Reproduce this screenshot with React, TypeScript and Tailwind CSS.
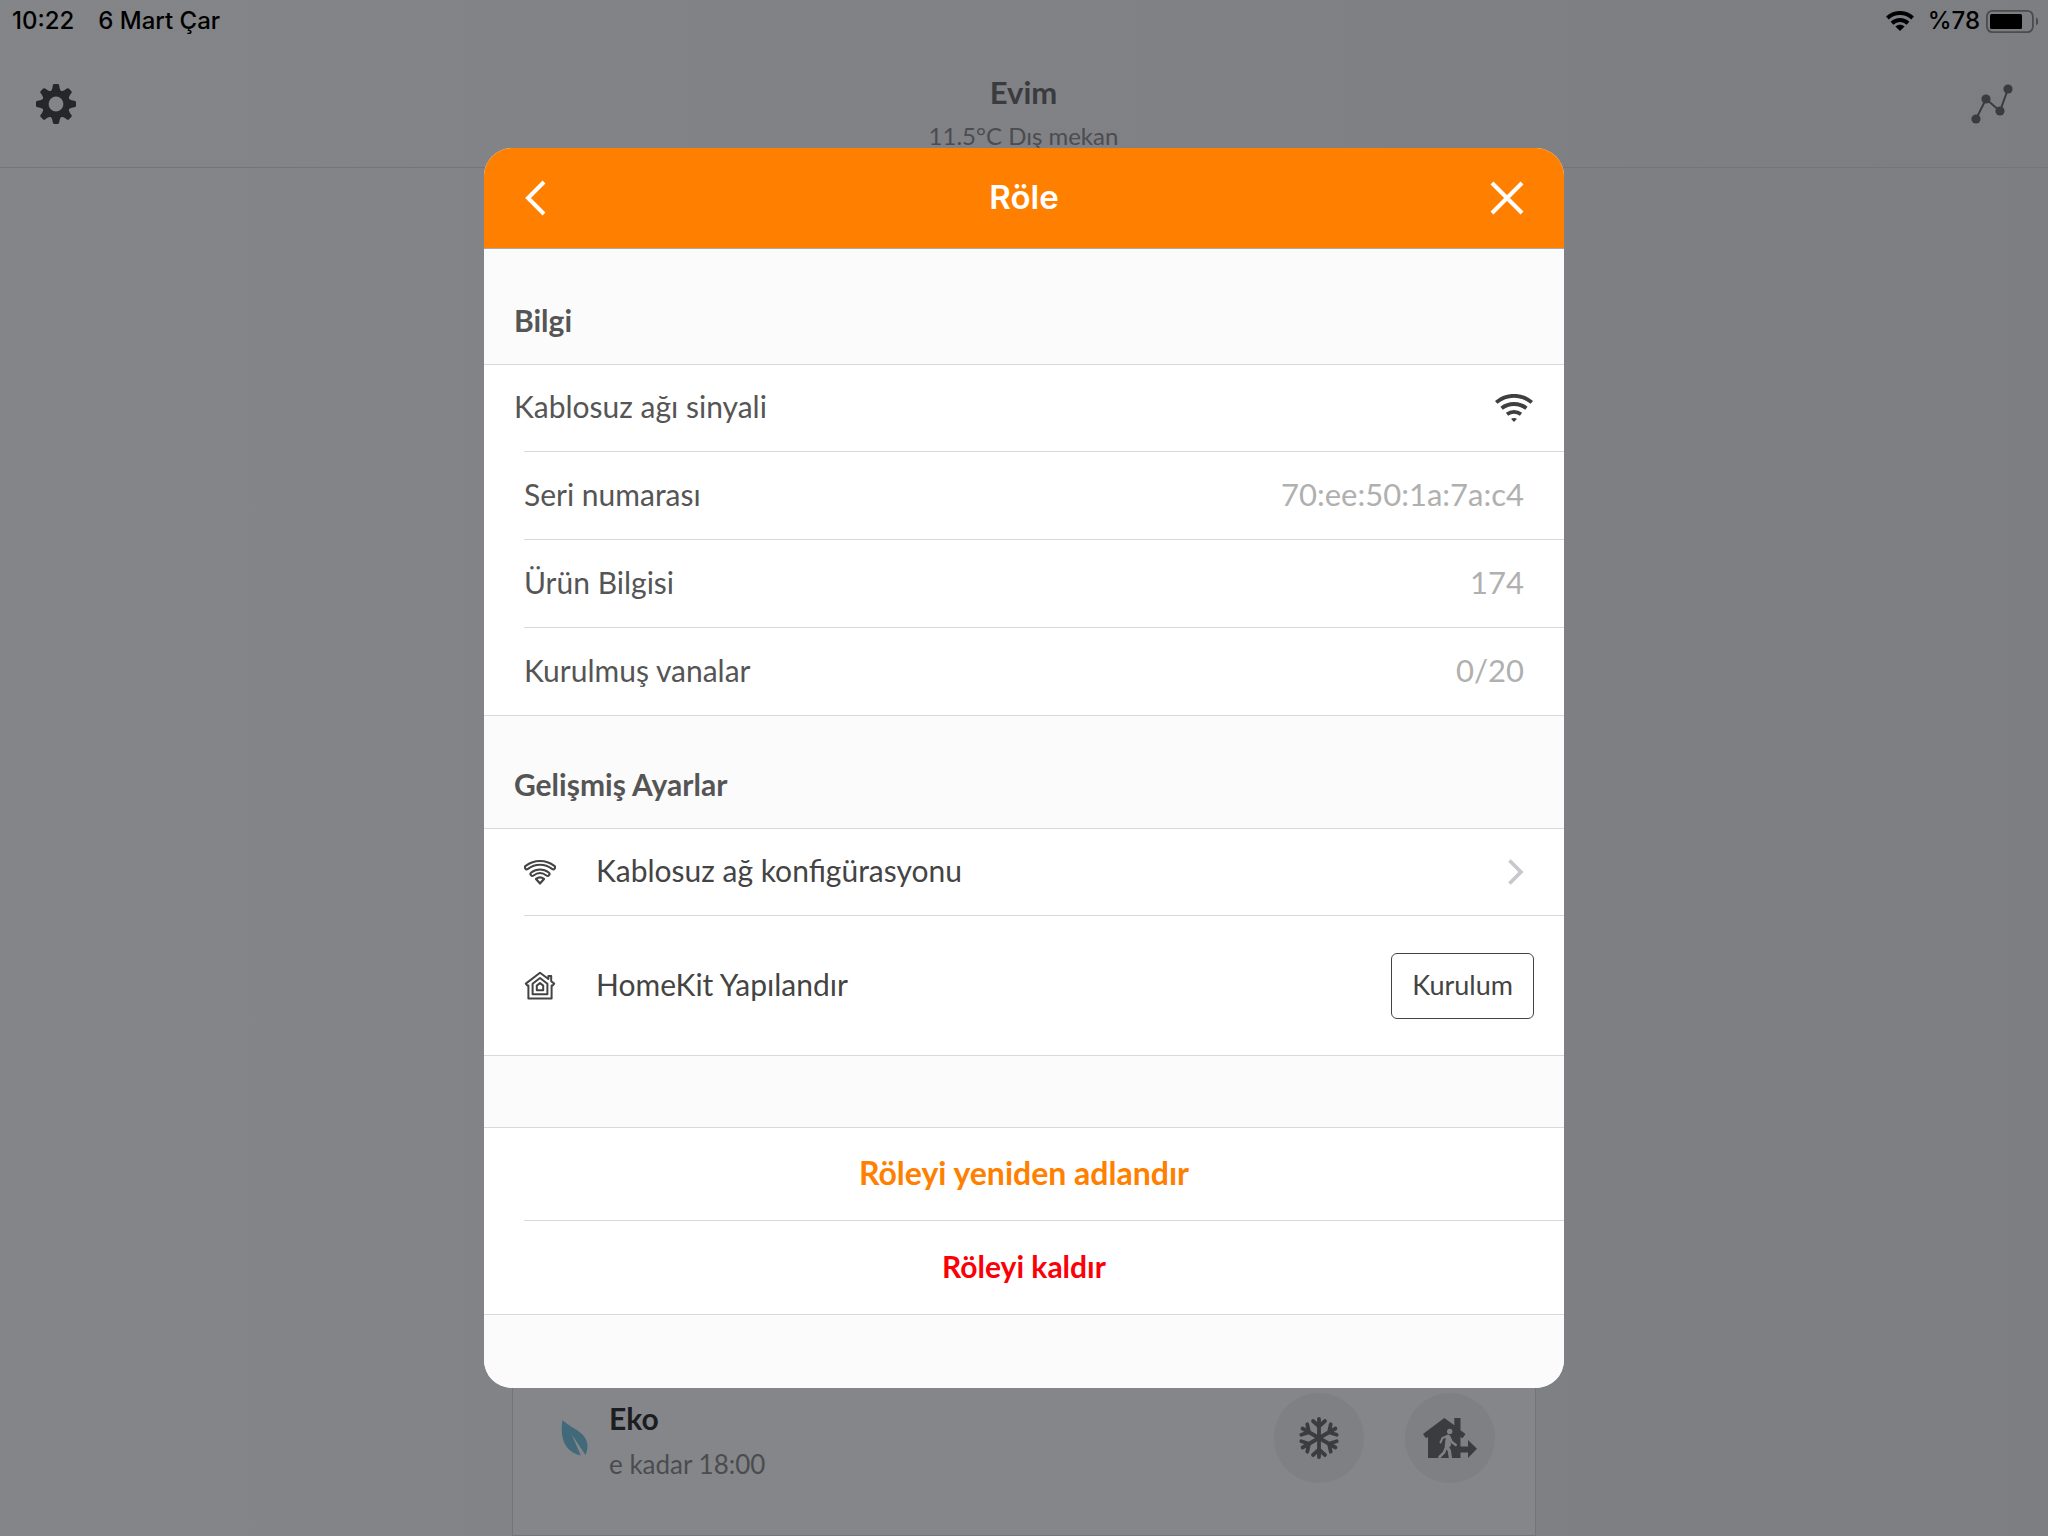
import type { ReactNode } from "react";

const StatusWifi = () => (
  <svg width="28" height="20" viewBox="0 0 28 20" fill="none" stroke="#000" strokeWidth="4">
    <path d="M1.4 7C8.600 .3 19.400 .3 26.600 7" />
    <path d="M6 12.200C10.600 8 17.400 8 22 12.200" />
    <path d="M14 20l-4.600-4.600c2.700-2.200 6.500-2.200 9.200 0z" fill="#000" stroke="none" />
  </svg>
);

const Battery = () => (
  <svg width="52" height="23" viewBox="0 0 52 23">
    <rect x="0.900" y="0.900" width="46" height="21.200" rx="5.500" fill="none" stroke="#4b4c4e" strokeWidth="1.800" />
    <rect x="4" y="4" width="32" height="15" rx="1.500" fill="#000" />
    <path d="M50 7.500c3.400 1.700 3.400 6.300 0 8z" fill="#4b4c4e" />
  </svg>
);

const GearIcon = () => (
  <svg width="40" height="40" viewBox="-20 -20 40 40" fill="#26272b">
    <circle r="10.700" fill="none" stroke="#26272b" strokeWidth="6.600" />
    {[0, 45, 90, 135, 180, 225, 270, 315].map((angle) => (
      <path
        key={angle}
        transform={`rotate(${angle})`}
        d="M-5.500-12.500C-4-14-3.500-16-3.200-18.600Q-3-20-1.800-20H1.800Q3-20 3.200-18.600C3.500-16 4-14 5.500-12.500z"
      />
    ))}
  </svg>
);

const GraphIcon = () => (
  <svg width="42" height="40" viewBox="0 0 42 40" fill="#3a3b3e">
    <path d="M5 35L15 15l14 12L37 5" fill="none" stroke="#3a3b3e" strokeWidth="2" />
    <circle cx="5" cy="35" r="4.600" />
    <circle cx="15" cy="15" r="4.600" />
    <circle cx="29" cy="27" r="4.600" />
    <circle cx="37" cy="5" r="4.600" />
  </svg>
);

const BackIcon = () => (
  <svg width="34" height="36" viewBox="0 0 34 36" fill="none" stroke="#fff" strokeWidth="4">
    <path d="M20 2L4 18l16 16" />
  </svg>
);

const CloseIcon = () => (
  <svg width="34" height="34" viewBox="0 0 34 34" fill="none" stroke="#fff" strokeWidth="4">
    <path d="M2 2l30 30M32 2L2 32" />
  </svg>
);

const ChevronIcon = () => (
  <svg width="16" height="26" viewBox="0 0 16 26" fill="none" stroke="#c7c7cc" strokeWidth="3.600">
    <path d="M1.500 1.500L13 13 1.500 24.500" />
  </svg>
);

const SignalIcon = () => (
  <svg width="39" height="28" viewBox="0 0 39 28" fill="none" stroke="#3f3f3f" strokeWidth="3.800">
    <path d="M1.200 8.400c10.600-8.800 25-8.800 35.600 0" />
    <path d="M6.600 14.200c7.200-5.600 17.600-5.600 24.800 0" />
    <path d="M12 20.200c4.200-3 9.800-3 14 0" />
    <path d="M16 24.800c1.900-1.100 4.100-1.100 6 0L19 28z" fill="#3f3f3f" stroke="none" />
  </svg>
);

const wifiArcs = ["M2.800 8.400C10.700 2.400 21.300 2.400 29.200 8.400", "M8.400 15c4.600-3.600 10.600-3.600 15.200 0"];

const WifiOutlineIcon = () => (
  <svg width="32" height="26" viewBox="0 0 32 26" fill="none" strokeLinecap="round" strokeLinejoin="round">
    {wifiArcs.map((d) => (
      <g key={d}>
        <path d={d} stroke="#444" strokeWidth="5.800" />
        <path d={d} stroke="#fff" strokeWidth="1.700" />
      </g>
    ))}
    <path d="M12 20c2.500-1.900 5.500-1.900 8 0L16 24.500z" stroke="#444" strokeWidth="2.200" />
  </svg>
);

const HomeKitIcon = () => (
  <svg width="32" height="30" viewBox="0 0 32 30" fill="none" stroke="#444" strokeWidth="2" strokeLinejoin="round">
    <path d="M16 1.800L1.800 12.600l1.400 1.800h1.200V27.600h23.200V14.400h1.200l1.400-1.800-3-2.300V5h-2.800v3z" />
    <path d="M16 7l-7.400 5.800v10.400h14.800V12.800z" />
    <path d="M16 12l-3.200 2.600v4.600h6.400v-4.600z" />
  </svg>
);

const LeafIcon = () => (
  <svg width="28" height="36" viewBox="0 0 28 36" fill="#41697a">
    <path d="M1.500 0C9 8 26 11.500 26.500 25.500c0 3.500-.7 6.500-2 9.500L10.500 14l9.300 21.600C5 32-1.800 20 1.500 0z" />
  </svg>
);

const SnowflakeIcon = () => (
  <svg width="42" height="42" viewBox="-21 -21 42 42" fill="none" stroke="#3b3c40" strokeWidth="3.800" strokeLinecap="round">
    {[0, 60, 120, 180, 240, 300].map((angle) => (
      <path key={angle} transform={`rotate(${angle})`} d="M0 0v-19M-6-17l6 5.500 6-5.500" />
    ))}
  </svg>
);

const AwayIcon = () => (
  <svg width="54" height="40" viewBox="0 0 54 40" fill="#3b3c40">
    <path d="M21.300 0L0 16l3 4.300L5 19v21h32.500V19l2 1.300 3-4.300-5-3.800V0h-6.200v7.300z" />
    <g stroke="#7f8084" fill="none" strokeLinecap="round" strokeLinejoin="round">
      <circle cx="26.700" cy="13.400" r="2.700" fill="#7f8084" stroke="none" />
      <path d="M24.300 20l-1 8 3 4.500 1.200 8" strokeWidth="3.200" />
      <path d="M24 27l-3 7.500-4.500 4.500" strokeWidth="2.600" />
      <path d="M24.500 18l-5 2-2 4.500" strokeWidth="2" />
      <path d="M26.200 18.500l2.600 5.500 4 3" strokeWidth="2.400" />
      <path d="M25 18.500L26 27" strokeWidth="4" />
    </g>
    <path d="M38 28.500h-4.500L36 34.500h9V40l9-9.200L45 22v6.500z" />
  </svg>
);

const SectionTitle = ({ children }: { children: ReactNode }) => (
  <div className="flex h-[113px] items-end border-b border-[#d9d9da] bg-[#fbfbfb] px-[30px] pb-7">
    <h2 className="text-3xl leading-8 font-bold text-[#555]">{children}</h2>
  </div>
);

const infoRows = [
  { label: "Seri numarası", value: "70:ee:50:1a:7a:c4" },
  { label: "Ürün Bilgisi", value: "174" },
  { label: "Kurulmuş vanalar", value: "0/20" },
];

const RelayDialog = () => (
  <div
    role="dialog"
    aria-label="Röle"
    className="w-full max-w-[1080px] overflow-hidden rounded-[28px] bg-white"
  >
    <header className="flex h-[101px] items-center justify-between border-b border-[#a9a9ab] bg-[#ff8000] px-10">
      <button aria-label="Geri">
        <BackIcon />
      </button>
      <h1 className="font-[Inter,sans-serif] text-[33px] font-semibold text-white">Röle</h1>
      <button aria-label="Kapat">
        <CloseIcon />
      </button>
    </header>

    {/* Info */}
    <div className="bg-[#fbfbfb] pt-[3px]">
      <SectionTitle>Bilgi</SectionTitle>
    </div>
    <div className="flex h-[86px] items-center justify-between px-[30px]">
      <span className="pb-1">Kablosuz ağı sinyali</span>
      <SignalIcon />
    </div>
    <dl className="border-b border-[#d9d9da] pl-10">
      {infoRows.map((row) => (
        <div key={row.label} className="flex h-[88px] items-center justify-between border-t border-[#d9d9da] pr-10 pb-0.5">
          <dt className="pb-0.5">{row.label}</dt>
          <dd className="text-[31px] text-[#b0b0b0]">{row.value}</dd>
        </div>
      ))}
    </dl>

    {/* Advanced settings */}
    <SectionTitle>Gelişmiş Ayarlar</SectionTitle>
    <div className="pl-10 text-[#444]">
      <button className="flex h-[87px] w-full items-center gap-10 border-b border-[#d9d9da] pr-10 text-left">
        <WifiOutlineIcon />
        <span className="flex-1 pb-1">Kablosuz ağ konfigürasyonu</span>
        <ChevronIcon />
      </button>
      <div className="flex h-[139px] items-center gap-10 pr-[30px]">
        <HomeKitIcon />
        <span className="flex-1 pb-1">HomeKit Yapılandır</span>
        <button className="h-[66px] rounded-md border border-[#444] px-5 text-[27px]">Kurulum</button>
      </div>
    </div>

    <div className="h-[73px] border-y border-[#d9d9da] bg-[#fbfbfb]" />
    <div className="pl-10 font-bold">
      <button className="block h-[93px] w-full border-b border-[#d9d9da] pr-10 pb-0.5 text-[32px] text-[#ff8000]">
        Röleyi yeniden adlandır
      </button>
      <button className="block h-[93px] w-full pr-10 pb-1 text-3xl text-[#fb0007]">Röleyi kaldır</button>
    </div>
    <div className="h-[74px] border-t border-[#d9d9da] bg-[#fbfbfb]" />
  </div>
);

const HomeScreen = () => (
  <div className="flex min-h-screen flex-col bg-linear-to-r from-[#848588] to-[#7d7e82]">
    <div className="flex h-10 items-center justify-between pt-0.5 pr-2.5 pl-3 font-[Inter,sans-serif] text-2xl font-medium text-black">
      <div className="flex gap-6">
        <span>10:22</span>
        <span>6 Mart Çar</span>
      </div>
      <div className="flex items-center">
        <StatusWifi />
        <span className="mr-1.5 ml-3.5">%78</span>
        <Battery />
      </div>
    </div>
    <header className="flex h-32 items-start justify-between border-b border-[#747578] pr-[35px] pl-9">
      <button aria-label="Ayarlar" className="mt-11">
        <GearIcon />
      </button>
      <div className="mt-8 text-center">
        <p className="text-[31px] leading-10 font-bold text-[#3a3b3e]">Evim</p>
        <p className="mt-1 text-2xl leading-10 text-[#4b4c4f]">11.5°C Dış mekan</p>
      </div>
      <button aria-label="Grafik" className="mt-11">
        <GraphIcon />
      </button>
    </header>
    <main className="flex flex-1 flex-col items-center justify-end">
      <section className="flex w-full max-w-[1024px] items-center border border-[#747578] bg-[#858689] px-10 pt-10 pb-[51px]">
        <div className="mx-2">
          <LeafIcon />
        </div>
        <div className="mt-1.5 ml-3 flex-1">
          <p className="text-3xl leading-10 font-bold text-[#1c1d21]">Eko</p>
          <p className="mt-1.5 text-[26px] leading-10 text-[#4b4c4f]">e kadar 18:00</p>
        </div>
        <div className="flex gap-[41px]">
          <button aria-label="Don koruması" className="flex size-[90px] items-center justify-center rounded-full bg-[#7f8084]">
            <SnowflakeIcon />
          </button>
          <button aria-label="Dışarıda" className="flex size-[90px] items-center justify-center rounded-full bg-[#7f8084]">
            <AwayIcon />
          </button>
        </div>
      </section>
    </main>
  </div>
);

export default function App() {
  return (
    <div className="font-[Lato,sans-serif] text-3xl text-[#555]">
      <HomeScreen />
      <div className="fixed inset-0 flex items-center justify-center">
        <RelayDialog />
      </div>
    </div>
  );
}
